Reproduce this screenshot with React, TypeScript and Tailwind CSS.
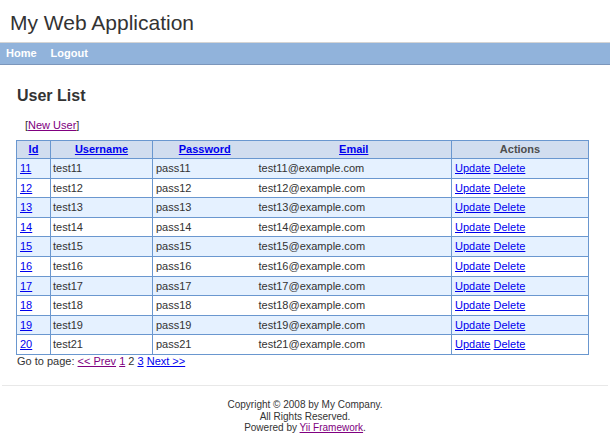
const users = [
	{ id: 11, name: "test11", pass: "pass11", email: "test11@example.com" },
	{ id: 12, name: "test12", pass: "pass12", email: "test12@example.com" },
	{ id: 13, name: "test13", pass: "pass13", email: "test13@example.com" },
	{ id: 14, name: "test14", pass: "pass14", email: "test14@example.com" },
	{ id: 15, name: "test15", pass: "pass15", email: "test15@example.com" },
	{ id: 16, name: "test16", pass: "pass16", email: "test16@example.com" },
	{ id: 17, name: "test17", pass: "pass17", email: "test17@example.com" },
	{ id: 18, name: "test18", pass: "pass18", email: "test18@example.com" },
	{ id: 19, name: "test19", pass: "pass19", email: "test19@example.com" },
	{ id: 20, name: "test21", pass: "pass21", email: "test21@example.com" },
];

const link = "text-[#0000ee] underline";
const visited = "text-[#800080] underline";

export default function App() {
	return (
		<div className="w-[610px] h-[442px] bg-white text-[11px] text-[#333] font-['Liberation_Sans',Arial,sans-serif]">
			<div className="h-[42px] pt-[11px] pl-[10px] text-[21px] leading-[24px] text-[#333]">
				My Web Application
			</div>
			<nav className="h-[23px] border-t border-b border-t-[#d4d4d4] border-b-[#7b96bb] bg-[#91b3db] flex gap-[14px] pl-[6px] text-white font-bold text-[11px] leading-[21px]">
				<span>Home</span>
				<span>Logout</span>
			</nav>

			<main className="pt-[22px] px-[16px]">
				<h1 className="pl-[1px] text-[16px] leading-[18px] font-bold text-[#333]">
					User List
				</h1>
				<div className="mt-[14px] pl-[9px] leading-[13px] text-[#333]">
					[<a className={visited}>New User</a>]
				</div>

				<table className="mt-[8px] w-[572px] table-fixed border-collapse border border-[#6a97cf]">
					<colgroup>
						<col className="w-[34px]" />
						<col className="w-[102px]" />
						<col className="w-[104px]" />
						<col className="w-[195px]" />
						<col className="w-[137px]" />
					</colgroup>
					<thead>
						<tr className="h-[18px] bg-[#d1ddef] font-bold">
							<th className="border-r border-[#6a97cf] p-0">
								<a className={link}>Id</a>
							</th>
							<th className="border-r border-[#6a97cf] p-0">
								<a className={link}>Username</a>
							</th>
							<th className="p-0">
								<a className={link}>Password</a>
							</th>
							<th className="border-r border-[#6a97cf] p-0">
								<a className={link}>Email</a>
							</th>
							<th className="p-0 text-[#4d4d4d]">Actions</th>
						</tr>
					</thead>
					<tbody>
						{users.map((u, i) => (
							<tr
								key={u.id}
								className={`h-[19.6px] border-t border-[#6a97cf] ${i % 2 === 0 ? "bg-[#e5f1ff]" : "bg-white"}`}
							>
								<td className="border-r border-[#6a97cf] pl-[3px] py-0">
									<a className={link}>{u.id}</a>
								</td>
								<td className="border-r border-[#6a97cf] pl-[2px] py-0">
									{u.name}
								</td>
								<td className="pl-[3px] py-0">{u.pass}</td>
								<td className="border-r border-[#6a97cf] pl-[2px] py-0">
									{u.email}
								</td>
								<td className="pl-[3px] py-0">
									<a className={link}>Update</a>{" "}
									<a className={link}>Delete</a>
								</td>
							</tr>
						))}
					</tbody>
				</table>

				<div className="pl-[1px] leading-[13px]">
					Go to page: <a className={visited}>&lt;&lt; Prev</a>{" "}
					<a className={visited}>1</a> 2 <a className={link}>3</a>{" "}
					<a className={link}>Next &gt;&gt;</a>
				</div>
			</main>

			<hr className="mt-[17px] mx-[2px] border-0 border-t border-[#e8e8e8]" />
			<footer className="pt-[13px] text-center text-[10px] leading-[11.6px] text-[#333]">
				<div>Copyright © 2008 by My Company.</div>
				<div>All Rights Reserved.</div>
				<div>
					Powered by <a className={visited}>Yii Framework</a>.
				</div>
			</footer>
		</div>
	);
}
